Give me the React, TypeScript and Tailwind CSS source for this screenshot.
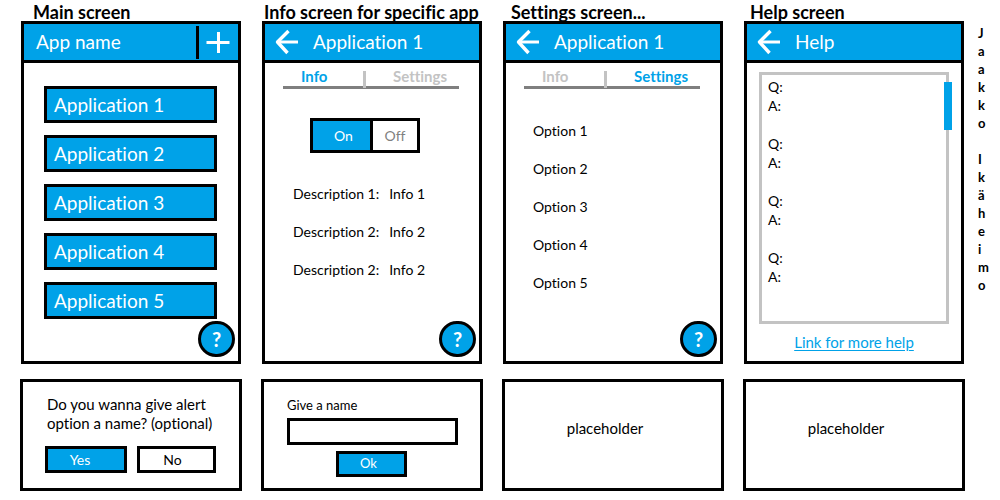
import type { ReactNode } from "react";

const apps = ["Application 1", "Application 2", "Application 3", "Application 4", "Application 5"];
const options = ["Option 1", "Option 2", "Option 3", "Option 4", "Option 5"];
const descriptions = [
  ["Description 1:", "Info 1"],
  ["Description 2:", "Info 2"],
  ["Description 2:", "Info 2"],
];
const author = "Jaakko Ikäheimo";

function BackIcon() {
  return (
    <svg width="24" height="26" viewBox="0 0 24 26" fill="none" stroke="white" strokeWidth="3" aria-hidden="true">
      <path d="M3 13H23" />
      <path d="M13.5 2L2.5 13L12.5 24" strokeLinejoin="round" strokeWidth="3.4" />
    </svg>
  );
}

function PlusIcon() {
  return (
    <svg width="24" height="24" viewBox="0 0 24 24" fill="none" stroke="white" strokeWidth="3" aria-hidden="true">
      <path d="M0.5 12.5H23.5M12.5 2V23" />
    </svg>
  );
}

type ColumnProps = { title: string; indent?: string; screen: ReactNode; dialog: ReactNode };

function Column({ title, indent = "pl-0.5", screen, dialog }: ColumnProps) {
  return (
    <section className="flex min-w-0 flex-col">
      <h2 className={`h-[21px] text-lg leading-6 font-bold whitespace-nowrap ${indent}`}>{title}</h2>
      <div className="relative flex min-h-[343px] flex-col border-3 border-black bg-white">{screen}</div>
      <div className="-mx-px mt-[15px] flex min-h-28 flex-col border-3 border-black bg-white">{dialog}</div>
    </section>
  );
}

function BackHeader({ title }: { title: string }) {
  return (
    <header className="flex h-[39px] items-center border-b-3 border-black bg-[#00a2e8] pl-2.5 text-white">
      <button type="button" aria-label="Back">
        <BackIcon />
      </button>
      <h3 className="pl-3.5 text-[19px] leading-6">{title}</h3>
    </header>
  );
}

function Tabs({ active }: { active: "Info" | "Settings" }) {
  const on = "text-[#00a2e8]";
  const off = "text-[#c3c3c3]";
  return (
    <div role="tablist" className="mr-5 ml-[18px] flex h-[26px] items-end border-b-3 border-[#7f7f7f] text-[15px] leading-5 font-bold">
      <button type="button" role="tab" aria-selected={active === "Info"} className={`w-20 pl-[18px] text-left ${active === "Info" ? on : off}`}>
        Info
      </button>
      <span className="-mb-0.5 h-[17px] w-[3px] bg-[#c3c3c3]" />
      <button type="button" role="tab" aria-selected={active === "Settings"} className={`pl-[27px] text-left ${active === "Settings" ? on : off}`}>
        Settings
      </button>
    </div>
  );
}

function HelpButton() {
  return (
    <button
      type="button"
      aria-label="Help"
      className="absolute right-[3px] bottom-1 flex h-9 w-[37px] items-center justify-center rounded-full border-3 border-black bg-[#00a2e8] text-xl leading-6 font-bold text-white"
    >
      ?
    </button>
  );
}

function MainScreen() {
  return (
    <>
      <header className="flex h-[39px] items-center border-b-3 border-black bg-[#00a2e8] text-white">
        <h3 className="flex-1 pl-3 text-[19px] leading-6">App name</h3>
        <button type="button" aria-label="Add application" className="flex h-[33px] items-center border-l-3 border-black pr-2 pl-[7px]">
          <PlusIcon />
        </button>
      </header>
      <div className="flex flex-col gap-3 pt-[23px] pr-[21px] pl-5">
        {apps.map((app) => (
          <button key={app} type="button" className="h-[37px] border-3 border-black bg-[#00a2e8] pl-[7px] text-left text-[19px] leading-6 text-white">
            {app}
          </button>
        ))}
      </div>
      <HelpButton />
    </>
  );
}

function InfoScreen() {
  return (
    <>
      <BackHeader title="Application 1" />
      <Tabs active="Info" />
      <div className="mt-[29px] ml-[45px] flex h-[35px] w-[110px] border-3 border-black text-sm">
        <button type="button" aria-pressed="true" className="flex-1 bg-[#00a2e8] pl-1 text-white">On</button>
        <button type="button" aria-pressed="false" className="w-[47px] border-l-3 border-black text-[#7f7f7f]">Off</button>
      </div>
      <dl className="mt-[31px] ml-7 flex flex-col gap-[19px] text-sm leading-[19px]">
        {descriptions.map(([term, value], i) => (
          <div key={i} className="flex gap-2.5">
            <dt>{term}</dt>
            <dd>{value}</dd>
          </div>
        ))}
      </dl>
      <HelpButton />
    </>
  );
}

function SettingsScreen() {
  return (
    <>
      <BackHeader title="Application 1" />
      <Tabs active="Settings" />
      <ul className="mt-8 ml-[27px] flex flex-col gap-[19px] text-sm leading-[19px]">
        {options.map((option) => (
          <li key={option}>{option}</li>
        ))}
      </ul>
      <HelpButton />
    </>
  );
}

function HelpScreen() {
  return (
    <>
      <BackHeader title="Help" />
      <div className="relative mx-3 mt-[9px] flex flex-1 flex-col gap-[19px] border-3 border-[#c3c3c3] pt-0.5 pl-1.5 text-sm leading-[19px]">
        {[1, 2, 3, 4].map((n) => (
          <div key={n}>
            <p>Q:</p>
            <p>A:</p>
          </div>
        ))}
        <span className="absolute top-[7px] -right-1.5 h-12 w-2 bg-[#00a2e8]" />
      </div>
      <a href="#help" className="mt-2 mb-[9px] self-center text-[15px] leading-5 text-[#00a2e8] underline underline-offset-2">
        Link for more help
      </a>
    </>
  );
}

function AlertDialog() {
  return (
    <div className="pt-[13px] pl-[22px] text-sm">
      <p className="pl-0.5 text-[15px] leading-[19px] whitespace-nowrap">
        Do you wanna give alert
        <br />
        option a name? (optional)
      </p>
      <div className="flex gap-2.5 pt-[13px]">
        <button type="button" className="h-[27px] w-[82px] border-3 border-black bg-[#00a2e8] pr-3 text-white">Yes</button>
        <button type="button" className="h-[27px] w-[79px] border-3 border-black bg-white pr-2">No</button>
      </div>
    </div>
  );
}

function NameDialog() {
  return (
    <form className="flex flex-col pt-3.5 pr-[22px] pl-[23px] text-[13px]">
      <label htmlFor="name" className="leading-[19px]">Give a name</label>
      <input id="name" type="text" className="mt-[3px] h-[27px] border-3 border-black bg-white px-1 outline-none" />
      <button type="button" className="mt-1.5 ml-[49px] h-[26px] w-[71px] border-3 border-black bg-[#00a2e8] pr-1.5 text-white">Ok</button>
    </form>
  );
}

function Placeholder() {
  return <p className="pt-[37px] pr-4 text-center text-[15px] leading-[19px]">placeholder</p>;
}

export default function App() {
  return (
    <main className="flex bg-white font-['Lato',sans-serif] text-black [font-variant-ligatures:none]">
      <div className="grid flex-1 grid-cols-4 gap-x-[21px] pl-[21px]">
        <Column title="Main screen" indent="pl-3" screen={<MainScreen />} dialog={<AlertDialog />} />
        <Column title="Info screen for specific app" screen={<InfoScreen />} dialog={<NameDialog />} />
        <Column title="Settings screen..." indent="pl-2" screen={<SettingsScreen />} dialog={<Placeholder />} />
        <Column title="Help screen" indent="pl-1.5" screen={<HelpScreen />} dialog={<Placeholder />} />
      </div>
      <aside className="flex w-9 flex-col pt-6 pl-3.5 text-[13px] leading-[18px] font-bold">
        {author.split("").map((letter, i) => (
          <span key={i} className="h-[18px]">{letter}</span>
        ))}
      </aside>
    </main>
  );
}
